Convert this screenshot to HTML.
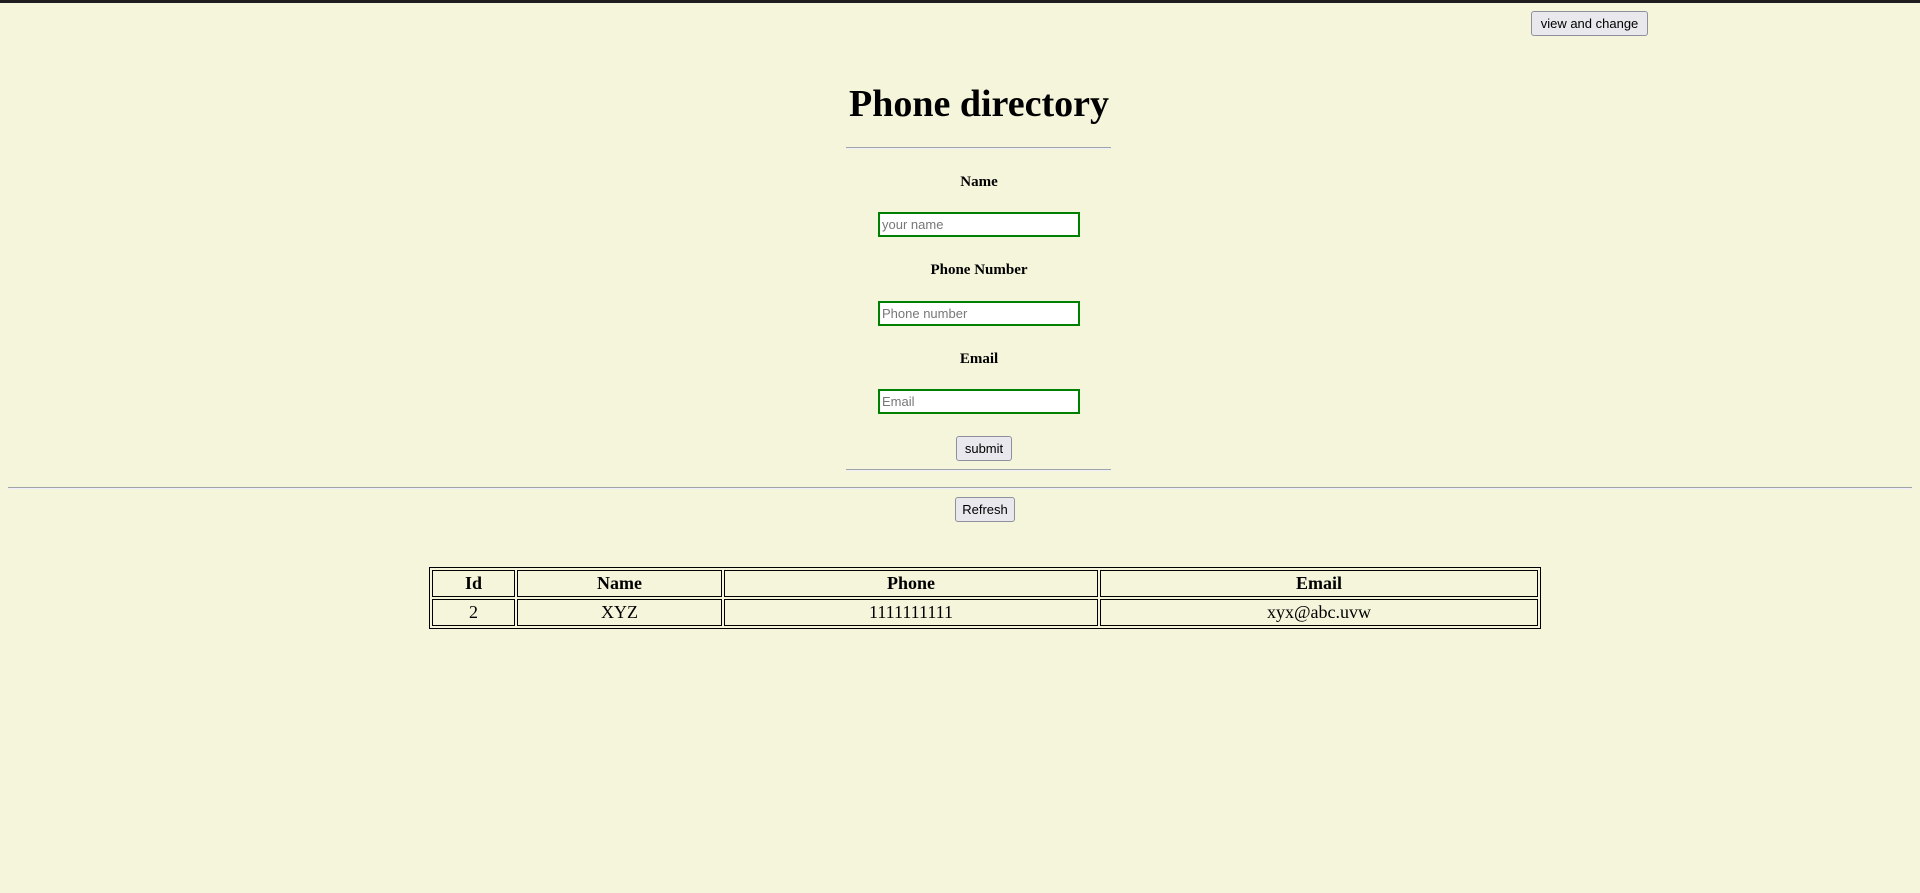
<!DOCTYPE html>
<html><head><meta charset="utf-8"><style>
html,body{margin:0;padding:0;}
body{width:1920px;height:893px;background:#f5f5dc;position:relative;overflow:hidden;font-family:"Liberation Serif",serif;color:#000;}
.bar{position:absolute;left:0;top:0;width:1920px;height:3px;background:#1e1e1e;}
.btn{position:absolute;box-sizing:border-box;background:#e9e9ed;border:1px solid #8f8f9d;border-radius:3px;font:13px "Liberation Sans",sans-serif;color:#000;display:flex;align-items:center;justify-content:center;}
.hr{position:absolute;height:0;border-top:1px solid #a0a4a8;border-bottom:1px solid #eef;}
h1{position:absolute;left:0;width:1958px;top:81px;margin:0;text-align:center;font-size:38px;font-weight:bold;line-height:46px;}
.lbl{position:absolute;left:0;width:1958px;text-align:center;font-weight:bold;font-size:15px;line-height:18px;}
.inp{position:absolute;left:878px;width:202px;height:25px;box-sizing:border-box;border:2px solid #008000;background:#fff;font:13px "Liberation Sans",sans-serif;color:#777;padding-left:2px;line-height:21px;}
table{position:absolute;left:429px;top:567px;width:1112px;border:1px solid #000;border-spacing:2px;border-collapse:separate;font-size:18px;}
td,th{border:1px solid #000;text-align:center;height:25px;padding:0 1px;line-height:25px;}
</style></head><body>
<div class="bar"></div>
<div class="btn" style="left:1531px;top:11px;width:117px;height:25px;">view and change</div>
<h1>Phone directory</h1>
<div class="hr" style="left:846px;top:147px;width:265px;"></div>
<div class="lbl" style="top:173px;">Name</div>
<div class="inp" style="top:212px;">your name</div>
<div class="lbl" style="top:261px;">Phone Number</div>
<div class="inp" style="top:301px;">Phone number</div>
<div class="lbl" style="top:350px;">Email</div>
<div class="inp" style="top:389px;">Email</div>
<div class="btn" style="left:956px;top:436px;width:56px;height:25px;">submit</div>
<div class="hr" style="left:846px;top:469px;width:265px;"></div>
<div class="hr" style="left:8px;top:487px;width:1904px;"></div>
<div class="btn" style="left:955px;top:497px;width:60px;height:25px;">Refresh</div>
<table>
<tr><th style="width:79px">Id</th><th style="width:201px">Name</th><th style="width:370px">Phone</th><th>Email</th></tr>
<tr><td>2</td><td>XYZ</td><td>1111111111</td><td>xyx@abc.uvw</td></tr>
</table>
</body></html>
